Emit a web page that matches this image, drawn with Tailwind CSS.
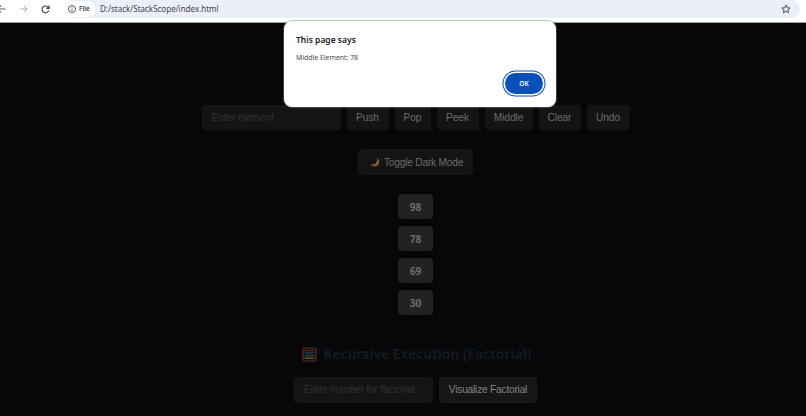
<!DOCTYPE html>
<html lang="en">

<head>
  <meta charset="UTF-8">
  <meta name="viewport" content="width=device-width, initial-scale=1.0">
  <title>StackScope</title>
  <script src="https://cdn.jsdelivr.net/npm/@tailwindcss/browser@4"></script>
</head>

<body class="h-[416px] overflow-hidden bg-[#070707] font-['Liberation_Sans',sans-serif]">

  <!-- Browser toolbar -->
  <header class="flex h-[23px] items-start border-b border-[#a0a0a0] bg-white font-['Noto_Sans',sans-serif] text-[#202124]">
    <div class="flex h-[18px] w-[63px] shrink-0 items-center">
      <svg class="-ml-1 size-[10px] shrink-0" viewBox="0 0 10 10" fill="none" stroke="#5a5d61" stroke-width="1.1"><path d="M9.5 5H1.5M5 1.5L1.5 5L5 8.5" /></svg>
      <svg class="ml-[14px] size-[8px] shrink-0" viewBox="0 0 8 8" fill="none" stroke="#a6a8ab" stroke-width="1"><path d="M0.5 4H7M4 1L7 4L4 7" /></svg>
      <svg class="ml-[13px] size-[9px] shrink-0" viewBox="0 0 9 9" fill="none" stroke="#3f4246" stroke-width="1.2"><path d="M7.7 5.3A3.4 3.4 0 1 1 7.1 2.3L8 3.3M8.1 0.6V3.4H5.3" /></svg>
    </div>
    <div class="flex h-[18px] w-[737px] items-center rounded-[9px] bg-[#ebeff9]">
      <div class="flex h-4 w-8 items-center gap-[3px] rounded-full bg-white pl-[5px]">
        <svg class="size-[8px] shrink-0" viewBox="0 0 8 8" fill="none" stroke="#3f4246" stroke-width="0.9"><circle cx="4" cy="4" r="3.5" /><path d="M4 3.6V6M4 2V2.9" /></svg>
        <span class="text-[6.5px] font-medium">File</span>
      </div>
      <span class="ml-[5px] text-[8px] whitespace-nowrap text-[#3f4246]">D:/stack/StackScope/index.html</span>
      <svg class="mr-[9px] ml-auto size-[10px]" viewBox="0 0 10 10" fill="none" stroke="#4a4d51" stroke-width="1"><path d="M5 1L6.2 3.7L9.1 4L6.9 5.9L7.6 8.8L5 7.3L2.4 8.8L3.1 5.9L0.9 4L3.8 3.7Z" /></svg>
    </div>
  </header>

  <main class="flex flex-col items-center pt-[82px] pl-[25px]">
    <!-- Stack controls -->
    <div class="flex h-[25px] gap-[6px] text-[10.2px] tracking-[-0.1px] text-[#6c6c6c]">
      <div class="flex w-[139px] items-center rounded-[3px] border border-[#161616] bg-[#141414] pl-[9px] text-[#333333]">Enter element</div>
      <button class="w-[42px] rounded-[3px] bg-[#141414]">Push</button>
      <button class="w-[36px] rounded-[3px] bg-[#141414]">Pop</button>
      <button class="w-[42px] rounded-[3px] bg-[#141414]">Peek</button>
      <button class="w-[48px] rounded-[3px] bg-[#141414]">Middle</button>
      <button class="w-[42px] rounded-[3px] bg-[#141414]">Clear</button>
      <button class="w-[43px] rounded-[3px] bg-[#141414]">Undo</button>
    </div>

    <button class="mt-[19px] flex h-[26px] w-[115px] items-center rounded-[3px] border border-[#161616] bg-[#141414] pl-[11px] text-[10.2px] tracking-[-0.22px] whitespace-nowrap text-[#6c6c6c]">
      <svg class="mr-[4px] size-[10px]" viewBox="0 0 10 10" fill="#8a5f2c"><path d="M7 0.8C10 3.2 9.8 7 7 8.7C4.6 10 1.6 9.3 0.5 7.2C3 8 5.3 7.2 6.4 5.4C7.3 4 7.4 2.3 7 0.8Z" /></svg>
      <span class="pt-[2px]">Toggle Dark Mode</span>
    </button>

    <!-- Stack -->
    <div class="mt-[19px] flex flex-col gap-[7px] font-['Noto_Sans',sans-serif] text-[10.2px] font-bold text-[#6c6c6c]">
      <div class="flex h-[25px] w-[35px] items-center justify-center rounded-[4px] bg-[#222222] pt-[2px]">98</div>
      <div class="flex h-[25px] w-[35px] items-center justify-center rounded-[4px] bg-[#222222] pt-[2px]">78</div>
      <div class="flex h-[25px] w-[35px] items-center justify-center rounded-[4px] bg-[#222222] pt-[2px]">69</div>
      <div class="flex h-[25px] w-[35px] items-center justify-center rounded-[4px] bg-[#222222] pt-[2px]">30</div>
    </div>

    <!-- Recursion -->
    <h2 class="mt-[29px] flex h-5 items-center gap-[7px] pl-[2px] font-['Noto_Sans',sans-serif] text-[13.6px] font-bold whitespace-nowrap text-[#121a22]">
      <svg class="size-[15px]" viewBox="0 0 15 15" fill="none" stroke-width="1.8">
        <path d="M2.5 3.5H12.5" stroke="#532020" />
        <path d="M2.5 6H12.5" stroke="#1d3154" />
        <path d="M2.5 8.7H12.5" stroke="#24452a" />
        <path d="M2.5 11.2H12.5" stroke="#594c1c" />
        <rect x="1" y="1" width="13" height="13" rx="1.5" stroke="#643024" stroke-width="1.2" />
      </svg>
      <span>Recursive Execution (Factorial)</span>
    </h2>
    <div class="mt-[13px] flex h-[26px] gap-[6px] text-[10.2px] tracking-[-0.22px]">
      <div class="flex w-[139px] items-center rounded-[3px] border border-[#161616] bg-[#141414] pl-[9px] tracking-[-0.17px] text-[#333333]">Enter number for factorial</div>
      <button class="w-[98px] rounded-[3px] border border-[#1a1a1a] bg-[#161616] whitespace-nowrap text-[#858585]">Visualize Factorial</button>
    </div>
  </main>

  <!-- Alert dialog -->
  <div class="absolute top-[21px] left-[284px] flex h-[86px] w-[272px] flex-col rounded-[8px] bg-white px-3 pt-[13px] font-['Noto_Sans',sans-serif] shadow-[0_0_1px_1px_#80808080]">
    <p class="text-[8.5px] leading-3 font-semibold text-[#202124]">This page says</p>
    <p class="mt-[6px] text-[6.9px] leading-3 text-[#4a4d51]">Middle Element: 78</p>
    <button class="mt-[9px] mr-px h-[21px] w-[38px] self-end rounded-full bg-[#0b50ba] text-[6.5px] font-semibold text-white ring-1 ring-[#0b50ba] ring-offset-[1.5px]">OK</button>
  </div>
</body>

</html>
